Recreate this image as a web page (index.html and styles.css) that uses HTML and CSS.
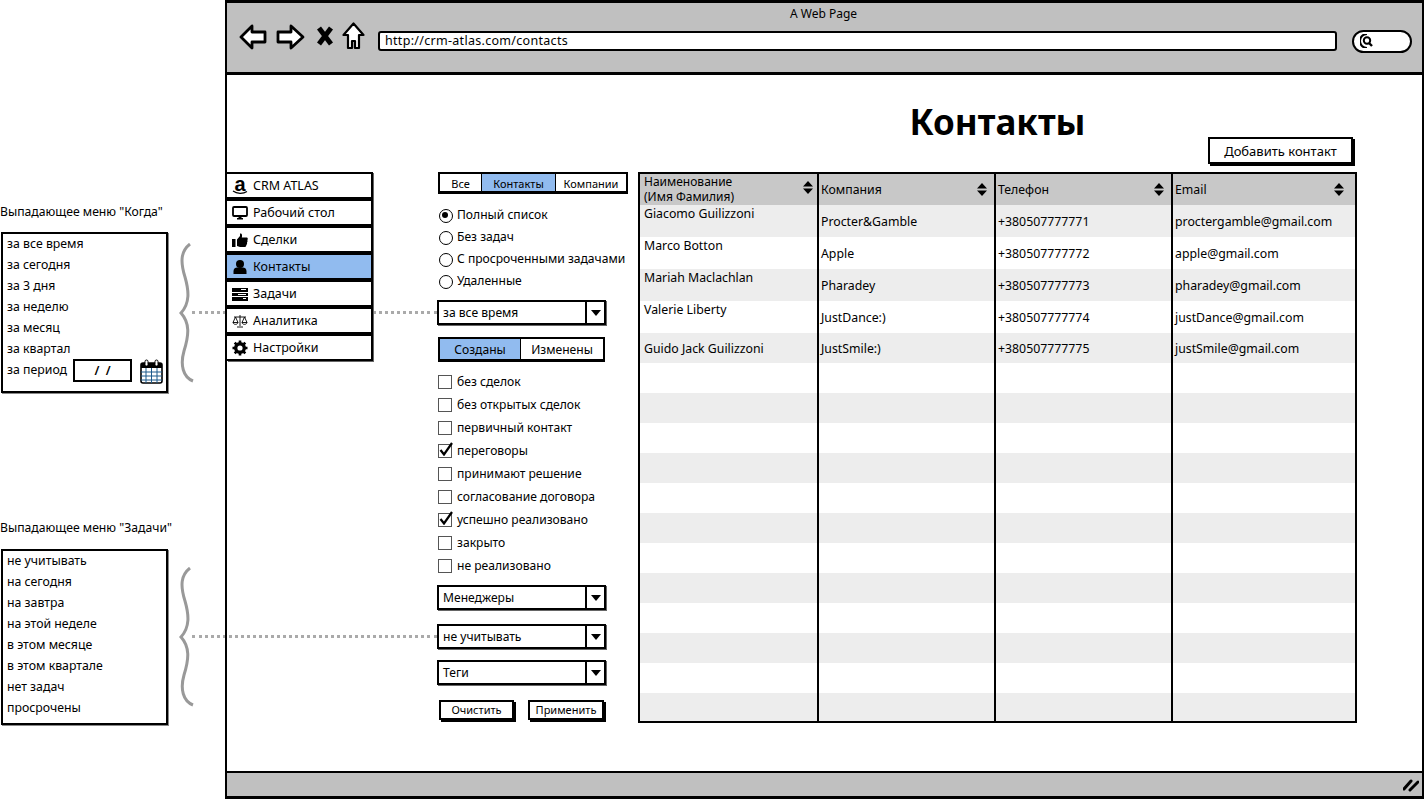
FILE: index.html
```html
<!DOCTYPE html>
<html lang="ru">
<head>
<meta charset="utf-8">
<title>Контакты</title>
<link rel="stylesheet" href="styles.css">
</head>
<body>
<svg width="0" height="0" class="defs">
  <symbol id="sort" viewBox="0 0 10 13"><path d="M5 0 10 5.5H0ZM5 13 0 7.5H10Z" fill="#000"/></symbol>
  <symbol id="caret" viewBox="0 0 12 7"><path d="M0 0H12L6 7Z" fill="#000"/></symbol>
  <symbol id="check" viewBox="0 0 14 14"><path d="M1.500 8 5 12.500 13 1" fill="none" stroke="#000" stroke-width="2.200"/></symbol>
</svg>

<aside class="notes">
  <section class="note note-when">
    <h2 class="note-title">Выпадающее меню "Когда"</h2>
    <ul class="note-box">
      <li>за все время</li>
      <li>за сегодня</li>
      <li>за 3 дня</li>
      <li>за неделю</li>
      <li>за месяц</li>
      <li>за квартал</li>
      <li class="period"><span class="period-label">за период</span>
        <span class="date">/&nbsp;&nbsp;/</span>
        <svg class="calendar" viewBox="0 0 23 25" width="23" height="25"><rect x="1" y="4" width="21" height="20" rx="2" fill="#fff" stroke="#000" stroke-width="1.6"/><path d="M1 4h21v5H1Z" fill="#000"/><path d="M1 13h21M1 17h21M1 21h21M6 9v15M11.500 9v15M17 9v15" stroke="#1d5a8c" stroke-width="1" fill="none"/><rect x="5" y="1" width="3" height="6" rx="1.500" fill="#fff" stroke="#000"/><rect x="15" y="1" width="3" height="6" rx="1.500" fill="#fff" stroke="#000"/></svg>
      </li>
    </ul>
    <svg class="brace brace-when" viewBox="0 0 16 140" width="16" height="140"><path d="M11 1C2 8 1 18 6 34 10 48 11 60 2 70 11 80 10 92 5 108 1 122 4 134 14 138" fill="none" stroke="#999" stroke-width="3"/></svg>
  </section>
  <section class="note note-tasks">
    <h2 class="note-title">Выпадающее меню "Задачи"</h2>
    <ul class="note-box">
      <li>не учитывать</li>
      <li>на сегодня</li>
      <li>на завтра</li>
      <li>на этой неделе</li>
      <li>в этом месяце</li>
      <li>в этом квартале</li>
      <li>нет задач</li>
      <li>просрочены</li>
    </ul>
    <svg class="brace brace-tasks" viewBox="0 0 16 140" width="16" height="140"><path d="M11 1C2 8 1 18 6 34 10 48 11 60 2 70 11 80 10 92 5 108 1 122 4 134 14 138" fill="none" stroke="#999" stroke-width="3"/></svg>
  </section>
</aside>

<div class="link link-when"></div>
<div class="link link-tasks"></div>

<div class="window">
  <header class="toolbar">
    <div class="window-title">A Web Page</div>
    <div class="navrow">
      <svg class="nav nav-back" viewBox="0 0 28 26" width="28" height="26"><path d="M13 2 2 13 13 24V18H26V8H13Z" fill="#fff" stroke="#000" stroke-width="2.800" stroke-linejoin="round"/></svg>
      <svg class="nav nav-fwd" viewBox="0 0 29 26" width="29" height="26"><path d="M15 2 27 13 15 24V18H2V8H15Z" fill="#fff" stroke="#000" stroke-width="2.800" stroke-linejoin="round"/></svg>
      <svg class="nav nav-stop" viewBox="0 0 16 20" width="16" height="20"><path d="M2 2 14 18M14 2 2 18" stroke="#000" stroke-width="5" fill="none"/></svg>
      <svg class="nav nav-home" viewBox="0 0 23 28" width="23" height="28"><path d="M11.500 1.500 1.500 13H6V26H10V19H13V26H17V13H21.500Z" fill="#fff" stroke="#000" stroke-width="2.200" stroke-linejoin="round"/></svg>
      <div class="address">http://crm-atlas.com/contacts</div>
      <div class="search"><svg viewBox="0 0 14 14" width="14" height="14"><path d="M7 0C3 0 0 3 0 7S3 14 7 14" fill="none" stroke="#000" stroke-width="2"/><circle cx="7" cy="6.500" r="3.200" fill="none" stroke="#000" stroke-width="2"/><path d="M9 9 12 12" stroke="#000" stroke-width="2.400"/></svg></div>
    </div>
  </header>

  <main class="page">
    <div class="head">
      <h1 class="title">Контакты</h1>
      <button class="btn btn-add">Добавить контакт</button>
    </div>

    <nav class="sidebar">
      <a class="side-item"><span class="ico amazon">a<svg viewBox="0 0 16 5" width="16" height="5"><path d="M1 1C5 4 11 4 15 1.500" fill="none" stroke="#000" stroke-width="1.200"/></svg></span>CRM ATLAS</a>
      <a class="side-item"><svg class="ico" viewBox="0 0 16 16" width="16" height="16"><rect x="1" y="2" width="14" height="9" rx="1" fill="#fff" stroke="#000" stroke-width="1.800"/><path d="M5 14.500H11V13H9.500V12H6.500V13H5Z" fill="#000"/></svg>Рабочий стол</a>
      <a class="side-item"><svg class="ico" viewBox="0 0 16 16" width="16" height="16"><rect x="0" y="7" width="3.500" height="8" fill="#000"/><path d="M5 7.500 8 4V1.500C10 1 10.500 3 9.800 5.500H15C16 6 16 7.500 15.300 8 15.800 9 15.500 10 15 10.500 15.300 11.500 15 12.500 14.300 13 14.300 14.500 13.500 15 12.500 15H8L5 14Z" fill="#000"/></svg>Сделки</a>
      <a class="side-item active"><svg class="ico" viewBox="0 0 16 16" width="16" height="16"><circle cx="8" cy="5" r="4" fill="#000"/><path d="M1.500 15V12C1.500 9.500 3.500 8.500 5 8.500H11C12.500 8.500 14.500 9.500 14.500 12V15Z" fill="#000"/></svg>Контакты</a>
      <a class="side-item"><svg class="ico" viewBox="0 0 16 16" width="16" height="16"><path d="M0 2H16V6H0ZM0 7H16V10H0ZM0 11H16V15H0Z" fill="#000"/><path d="M9 3.500H14M6 8.500H14M11 12.500H14" stroke="#fff" stroke-width="1"/></svg>Задачи</a>
      <a class="side-item"><svg class="ico" viewBox="0 0 16 14" width="16" height="14"><path d="M8 1V12M5 13H11M2 3H14M3.500 3 1 8.500H6ZM12.500 3 10 8.500H15ZM1 8.500C1.500 11 5.500 11 6 8.500M10 8.500C10.500 11 14.500 11 15 8.500" fill="none" stroke="#000" stroke-width=".9"/></svg>Аналитика</a>
      <a class="side-item"><svg class="ico" viewBox="0 0 16 16" width="16" height="16"><circle cx="8" cy="8" r="4.300" fill="none" stroke="#000" stroke-width="3.400"/><path d="M8 .5V3M8 13V15.500M.5 8H3M13 8H15.500M2.700 2.700 4.500 4.500M11.500 11.500 13.300 13.300M13.300 2.700 11.500 4.500M4.500 11.500 2.700 13.300" stroke="#000" stroke-width="2.600"/></svg>Настройки</a>
    </nav>

    <form class="filters">
      <div class="tabs">
        <span class="tab tab-all">Все</span><span class="tab tab-contacts on">Контакты</span><span class="tab tab-companies">Компании</span>
      </div>
      <div class="radios">
        <label class="radio checked">Полный список</label>
        <label class="radio">Без задач</label>
        <label class="radio">С просроченными задачами</label>
        <label class="radio">Удаленные</label>
      </div>
      <div class="select sel-period"><span>за все время</span><i><svg width="10" height="6"><use href="#caret"/></svg></i></div>
      <div class="segment"><span class="seg on">Созданы</span><span class="seg">Изменены</span></div>
      <div class="checks">
        <label class="check">без сделок</label>
        <label class="check">без открытых сделок</label>
        <label class="check">первичный контакт</label>
        <label class="check checked"><svg class="tick" width="14" height="14"><use href="#check"/></svg>переговоры</label>
        <label class="check">принимают решение</label>
        <label class="check">согласование договора</label>
        <label class="check checked"><svg class="tick" width="14" height="14"><use href="#check"/></svg>успешно реализовано</label>
        <label class="check">закрыто</label>
        <label class="check">не реализовано</label>
      </div>
      <div class="select sel-managers"><span>Менеджеры</span><i><svg width="10" height="6"><use href="#caret"/></svg></i></div>
      <div class="select sel-tasks"><span>не учитывать</span><i><svg width="10" height="6"><use href="#caret"/></svg></i></div>
      <div class="select sel-tags"><span>Теги</span><i><svg width="10" height="6"><use href="#caret"/></svg></i></div>
      <div class="actions">
        <button type="button" class="btn btn-small btn-clear">Очистить</button>
        <button type="button" class="btn btn-small btn-apply">Применить</button>
      </div>
    </form>

    <div class="table-wrap">
      <table class="grid">
        <colgroup><col class="c1"><col class="c2"><col class="c3"><col class="c4"></colgroup>
        <thead>
          <tr>
            <th><div class="th th-first"><span>Наименование<br>(Имя Фамилия)</span><svg width="10" height="13"><use href="#sort"/></svg></div></th>
            <th><div class="th"><span>Компания</span><svg width="10" height="13"><use href="#sort"/></svg></div></th>
            <th><div class="th"><span>Телефон</span><svg width="10" height="13"><use href="#sort"/></svg></div></th>
            <th><div class="th th-last"><span>Email</span><svg width="10" height="13"><use href="#sort"/></svg></div></th>
          </tr>
        </thead>
        <tbody>
          <tr class="tall"><td class="name">Giacomo Guilizzoni</td><td>Procter&amp;Gamble</td><td>+380507777771</td><td>proctergamble@gmail.com</td></tr>
          <tr class="tall"><td class="name">Marco Botton</td><td>Apple</td><td>+380507777772</td><td>apple@gmail.com</td></tr>
          <tr class="tall"><td class="name">Mariah Maclachlan</td><td>Pharadey</td><td>+380507777773</td><td>pharadey@gmail.com</td></tr>
          <tr class="tall"><td class="name">Valerie Liberty</td><td>JustDance:)</td><td>+380507777774</td><td>justDance@gmail.com</td></tr>
          <tr><td>Guido Jack Guilizzoni</td><td>JustSmile:)</td><td>+380507777775</td><td>justSmile@gmail.com</td></tr>
          <tr><td></td><td></td><td></td><td></td></tr>
          <tr><td></td><td></td><td></td><td></td></tr>
          <tr><td></td><td></td><td></td><td></td></tr>
          <tr><td></td><td></td><td></td><td></td></tr>
          <tr><td></td><td></td><td></td><td></td></tr>
          <tr><td></td><td></td><td></td><td></td></tr>
          <tr><td></td><td></td><td></td><td></td></tr>
          <tr><td></td><td></td><td></td><td></td></tr>
          <tr><td></td><td></td><td></td><td></td></tr>
          <tr><td></td><td></td><td></td><td></td></tr>
          <tr><td></td><td></td><td></td><td></td></tr>
          <tr><td></td><td></td><td></td><td></td></tr>
        </tbody>
      </table>
    </div>
  </main>

  <footer class="statusbar">
    <svg class="grip" viewBox="0 0 16 14" width="16" height="14"><path d="M1 11 8 3M7 12 15 4" stroke="#000" stroke-width="3" stroke-linecap="round"/></svg>
  </footer>
</div>
</body>
</html>
```

FILE: styles.css
```css
* { box-sizing: border-box; }
html, body { margin: 0; padding: 0; }
body {
  width: 1424px;
  height: 800px;
  overflow: hidden;
  position: relative;
  display: flex;
  background: #fff;
  color: #000;
  font-family: "Noto Sans", "Liberation Sans", sans-serif;
  font-size: 12.5px;
  line-height: 16px;
}
.defs { position: absolute; }

/* annotations */
.notes { width: 225px; flex: none; padding-top: 205px; }
.note { position: relative; }
.note-tasks { margin-top: 128px; }
.note-title { margin: 0 0 13px; font-size: 12.2px; font-weight: 400; line-height: 14px; white-space: nowrap; }
.note-tasks .note-title { margin-bottom: 14px; }
.note-box {
  list-style: none;
  margin: 0 0 0 1px;
  padding: 0 0 0 4px;
  width: 167px;
  border: 2px solid #000;
  box-shadow: 1px 1px 0 #888;
  font-size: 12.3px;
  line-height: 21px;
}
.note-box li:first-child { margin-top: -1px; }
.note-when .note-box { height: 161px; }
.note-tasks .note-box { height: 176px; }
.period { display: flex; align-items: flex-start; }
.period-label { white-space: nowrap; width: 66px; flex: none; }
.date {
  width: 59px;
  height: 23px;
  border: 2px solid #000;
  background: #fff;
  text-align: center;
  line-height: 20px;
  font-weight: 600;
  flex: none;
}
.calendar { margin: 0 0 0 8px; flex: none; }
.brace { position: absolute; left: 179px; }
.brace-when { top: 38px; }
.brace-tasks { top: 46px; }
.link { position: absolute; left: 192px; width: 245px; border-top: 3px dotted #aaa; }
.link-when { top: 311px; }
.link-tasks { top: 635px; }

/* browser window */
.window {
  position: relative;
  width: 1199px;
  height: 799px;
  flex: none;
  display: flex;
  flex-direction: column;
  border: 2px solid #000;
  border-top-width: 3px;
  border-bottom-width: 3px;
}
.toolbar { height: 72px; flex: none; background: #c0c0c0; border-bottom: 3px solid #000; }
.window-title { padding-top: 4px; height: 18px; text-align: center; font-size: 12px; line-height: 14px; margin-left: -2px; }
.navrow { display: flex; align-items: flex-start; padding: 1px 0 0 12px; }
.nav { flex: none; }
.nav-back { margin-top: 2px; }
.nav-fwd { margin: 2px 0 0 9px; }
.nav-stop { margin: 4px 0 0 12px; }
.nav-home { margin: 0 0 0 9px; }
.address {
  width: 959px;
  height: 20px;
  margin: 9px 0 0 13px;
  padding-left: 5px;
  border: 2px solid #000;
  border-radius: 3px;
  background: #fff;
  font-size: 12.500px;
  line-height: 16px;
  letter-spacing: .3px;
}
.search {
  width: 60px;
  height: 23px;
  margin: 8px 0 0 15px;
  padding: 2px 0 0 6px;
  border: 2px solid #000;
  border-radius: 12px;
  background: #fff;
}
.search svg { display: block; }

/* page grid */
.page {
  flex: 1;
  display: grid;
  grid-template-columns: 210px 201px 719px;
  grid-template-rows: 97px 1fr;
  align-items: start;
}
.head { grid-column: 3; grid-row: 1; display: grid; height: 97px; }
.title, .btn-add { grid-area: 1 / 1; }
.title {
  margin: 25px 0 0;
  text-align: center;
  font-size: 35px;
  font-weight: 700;
  line-height: 44px;
}
.btn {
  font: inherit;
  color: #000;
  background: #fff;
  border: 2px solid #000;
  box-shadow: 2px 2px 0 #000;
  padding: 0;
}
.btn-add {
  justify-self: end;
  align-self: end;
  width: 145px;
  height: 27px;
  margin: 0 4px 8px 0;
  font-size: 13px;
  position: relative;
}

/* sidebar */
.sidebar { grid-column: 1; grid-row: 2; width: 146px; position: relative; z-index: 1; background: #fff; }
.side-item {
  display: flex;
  align-items: center;
  height: 27px;
  padding-left: 5px;
  border: 2px solid #000;
  border-left: 0;
  background: #fff;
  box-shadow: 1px 1px 0 #666;
  font-size: 12.500px;
}
.side-item.active { background: #91bbef; }
.ico { width: 16px; margin-right: 5px; flex: none; }
.amazon {
  display: flex;
  flex-direction: column;
  align-items: center;
  font: 700 20px/14px "Liberation Sans", sans-serif;
}
.amazon svg { display: block; margin-top: -1px; }

/* filters */
.filters { grid-column: 2; grid-row: 2; position: relative; z-index: 1; font-size: 12.100px; }
.tabs {
  display: flex;
  width: 190px;
  height: 22px;
  margin-left: 1px;
  border: 2px solid #000;
  border-bottom-width: 3px;
  background: #fff;
  font-size: 11px;
  line-height: 19px;
  text-align: center;
}
.tab { border-right: 1px solid #000; flex: none; }
.tab-all { width: 42px; }
.tab-contacts { width: 74px; }
.tab-companies { width: 70px; border-right: 0; }
.on { background: #91bbef; }
.radios { padding-top: 10px; }
.radio { display: block; position: relative; height: 22px; padding-left: 20px; line-height: 22px; white-space: nowrap; }
.radio::before {
  content: "";
  position: absolute;
  left: 2px;
  top: 5px;
  width: 12px;
  height: 12px;
  border: 1.500px solid #000;
  border-radius: 50%;
  background: #fff;
}
.radio.checked::after {
  content: "";
  position: absolute;
  left: 5px;
  top: 8px;
  width: 6px;
  height: 6px;
  border-radius: 50%;
  background: #000;
}
.select {
  display: flex;
  justify-content: space-between;
  width: 169px;
  height: 25px;
  border: 2px solid #000;
  background: #fff;
  box-shadow: 1px 1px 0 #666;
  line-height: 21px;
  padding-left: 4px;
}
.select i { display: flex; align-items: center; justify-content: center; width: 19px; border-left: 2px solid #000; }
.sel-period { margin-top: 8px; }
.segment {
  display: flex;
  width: 167px;
  height: 25px;
  margin: 12px 0 0 1px;
  border: 2px solid #000;
  border-bottom-width: 3px;
  line-height: 22px;
  text-align: center;
}
.seg { width: 81px; height: 20px; }
.seg + .seg { border-left: 1px solid #000; width: 84px; }
.checks { padding-top: 8px; }
.check { display: block; position: relative; height: 23px; padding-left: 20px; line-height: 23px; white-space: nowrap; }
.check::before {
  content: "";
  position: absolute;
  left: 1px;
  top: 5px;
  width: 12px;
  height: 12px;
  border: 1.500px solid #555;
  background: #fff;
}
.tick { position: absolute; left: 2px; top: 3px; }
.sel-managers { margin-top: 8px; }
.sel-tasks { margin-top: 14px; }
.sel-tags { margin-top: 11px; }
.actions { display: flex; gap: 14px; margin: 15px 0 0 2px; }
.btn-small { height: 20px; font-size: 11px; line-height: 14px; }
.btn-clear { width: 75px; }
.btn-apply { width: 76px; }

/* table */
.table-wrap { grid-column: 3; grid-row: 2; width: 719px; border: 2px solid #000; }
.grid { width: 715px; table-layout: fixed; border-collapse: separate; border-spacing: 0; font-size: 12.300px; }
.c1 { width: 177px; }
.c2, .c3 { width: 177px; }
.c4 { width: 184px; }
.grid th {
  height: 31px;
  padding: 0;
  background: #c8c8c8;
  font-weight: 400;
  text-align: left;
  line-height: 15px;
}
.th { display: flex; justify-content: space-between; align-items: center; padding: 0 7px 0 2px; height: 31px; }
.th-first { padding: 0 4px 0 4px; align-items: flex-start; font-size: 12px; }
.th-first svg { margin-top: 7px; }
.th-last { padding-right: 11px; }
.grid th + th, .grid td + td { border-left: 2px solid #000; }
.grid td { height: 30px; padding: 2px 0 0 2px; vertical-align: middle; white-space: nowrap; }
.grid td:first-child { padding-left: 4px; }
.grid .tall td { height: 32px; }
.grid .tall .name { vertical-align: top; line-height: 16px; padding-top: 1px; }
.grid tbody tr:nth-child(odd) td { background: #ededed; }
.grid tbody tr:last-child td { height: 28px; }

/* status bar */
.statusbar {
  height: 25px;
  flex: none;
  margin-top: auto;
  display: flex;
  justify-content: flex-end;
  align-items: center;
  padding-right: 3px;
  background: #c0c0c0;
  border-top: 2px solid #000;
}
```
